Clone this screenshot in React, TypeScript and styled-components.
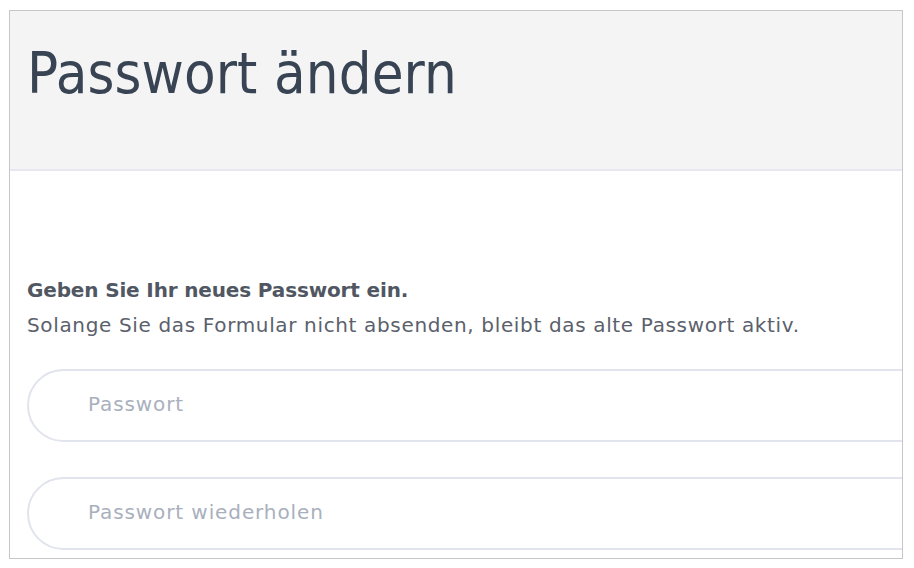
import React from "react";
import styled, { createGlobalStyle } from "styled-components";

const Global = createGlobalStyle`
  html, body { margin: 0; padding: 0; background: #ffffff; }
  * { box-sizing: border-box; }
`;

const Frame = styled.div`
  margin: 10px 0 0 9px;
  width: 894px;
  height: 549px;
  border: 1px solid #c6c6c6;
  overflow: hidden;
  background: #ffffff;
  display: flex;
  flex-direction: column;
`;

const Header = styled.header`
  height: 160px;
  flex: none;
  background: #f4f4f4;
  border-bottom: 2px solid #e7e8ef;
  padding: 28px 0 0 17px;
`;

const Title = styled.h1`
  margin: 0;
  font-family: "DejaVu Sans Condensed", "DejaVu Sans", sans-serif;
  font-weight: 400;
  font-size: 57.5px;
  line-height: 70px;
  letter-spacing: 0.1px;
  color: #384453;
`;

const Content = styled.main`
  padding: 102px 0 0 17px;
  display: flex;
  flex-direction: column;
`;

const Lead = styled.p<{ $strong?: boolean }>`
  margin: 0;
  font-family: "DejaVu Sans", sans-serif;
  font-size: 20px;
  line-height: 35px;
  letter-spacing: ${(p) => (p.$strong ? "-0.15px" : "0.65px")};
  color: ${(p) => (p.$strong ? "#505762" : "#5b616c")};
  font-weight: ${(p) => (p.$strong ? 700 : 400)};
`;

const Fields = styled.div`
  margin-top: 26px;
  display: flex;
  flex-direction: column;
  gap: 35px;
  width: 1000px;
`;

const Field = styled.input`
  height: 73px;
  width: 100%;
  border: 2px solid #e1e4ec;
  border-radius: 37px;
  padding: 0 0 3px 59px;
  font-family: "DejaVu Sans", sans-serif;
  font-size: 20px;
  letter-spacing: 0.9px;
  color: #5b616c;
  background: #ffffff;
  outline: none;
  &::placeholder { color: #a9b0bd; }
`;

export default function App() {
  return (
    <>
      <Global />
      <Frame>
        <Header>
          <Title>Passwort ändern</Title>
        </Header>
        <Content>
          <Lead $strong>Geben Sie Ihr neues Passwort ein.</Lead>
          <Lead>Solange Sie das Formular nicht absenden, bleibt das alte Passwort aktiv.</Lead>
          <Fields>
            <Field type="password" placeholder="Passwort" />
            <Field type="password" placeholder="Passwort wiederholen" />
          </Fields>
        </Content>
      </Frame>
    </>
  );
}
